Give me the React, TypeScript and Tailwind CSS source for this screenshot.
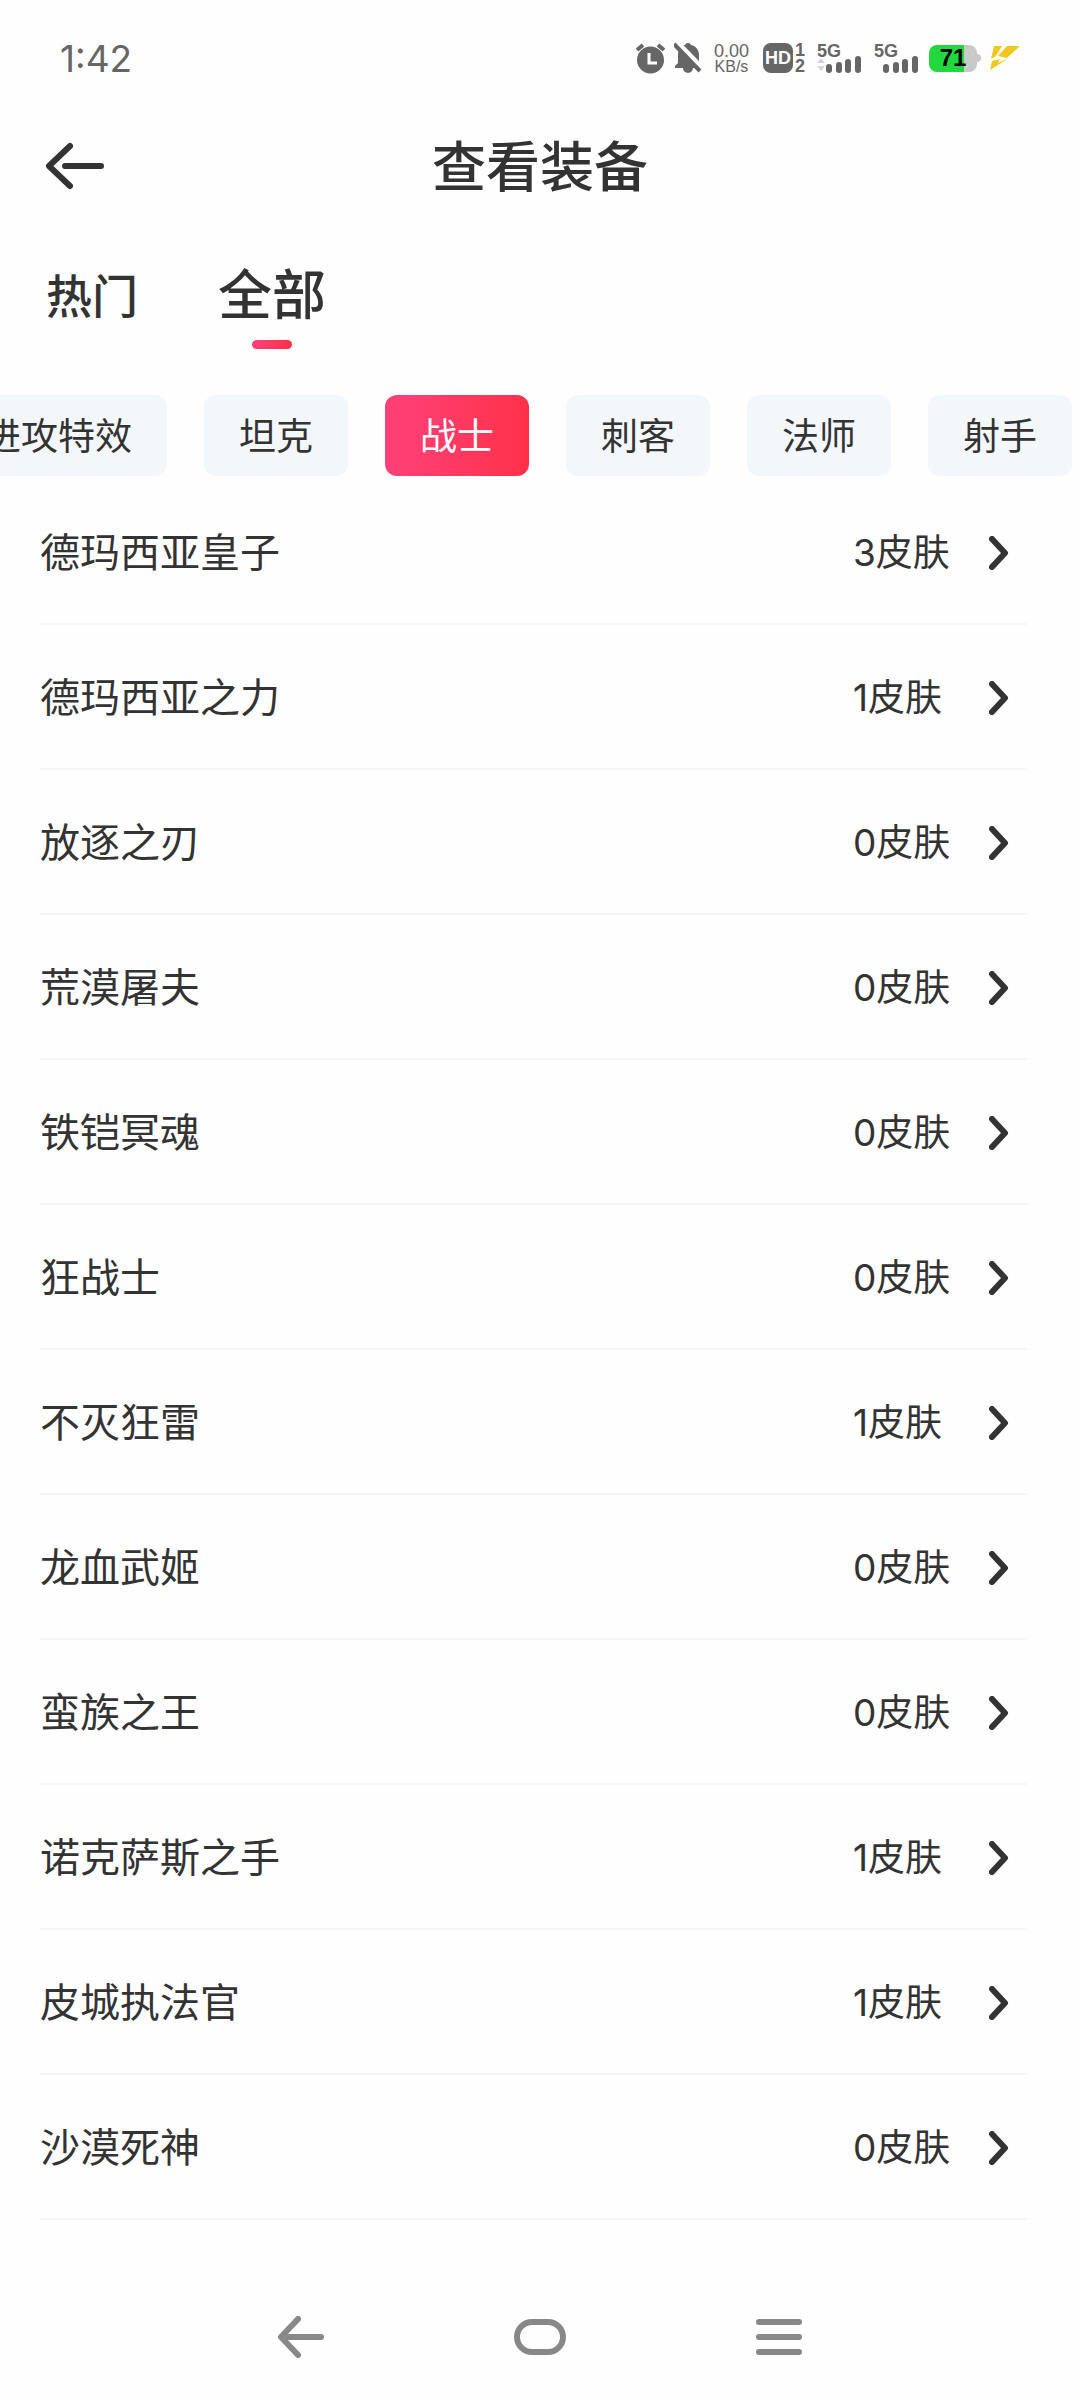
import React, { useState } from "react";

const CATEGORIES = ["进攻特效", "坦克", "战士", "刺客", "法师", "射手"];

const HEROES = [
  { name: "德玛西亚皇子", skins: 3 },
  { name: "德玛西亚之力", skins: 1 },
  { name: "放逐之刃", skins: 0 },
  { name: "荒漠屠夫", skins: 0 },
  { name: "铁铠冥魂", skins: 0 },
  { name: "狂战士", skins: 0 },
  { name: "不灭狂雷", skins: 1 },
  { name: "龙血武姬", skins: 0 },
  { name: "蛮族之王", skins: 0 },
  { name: "诺克萨斯之手", skins: 1 },
  { name: "皮城执法官", skins: 1 },
  { name: "沙漠死神", skins: 0 },
];

function Signal({ data = false }: { data?: boolean }) {
  return (
    <div className="relative h-8 w-[45px] font-['Liberation_Sans']">
      <span className="absolute top-0 left-0 text-[18px] leading-[18px] font-bold">5G</span>
      <svg className="absolute inset-0" width="45" height="32" viewBox="0 0 45 32" fill="currentColor" aria-hidden="true">
        {data && (
          <g fill="#d4d4d4">
            <path d="M0 21l4-5 4 5z" />
            <path d="M0 24h8l-4 5z" />
          </g>
        )}
        <rect x="9" y="22" width="6" height="9" rx="3" />
        <rect x="19" y="20" width="6" height="11" rx="3" />
        <rect x="28" y="17" width="6" height="14" rx="3" />
        <rect x="38" y="14" width="6" height="17" rx="3" />
      </svg>
    </div>
  );
}

function StatusBar() {
  return (
    <div className="flex h-[116px] items-center justify-between px-[60px] text-[#666666]">
      <time className="text-[37px] leading-none">1:42</time>
      <div className="flex items-center">
        <svg className="mr-2" width="31" height="32" viewBox="0 0 31 32" aria-hidden="true">
          <circle cx="15.500" cy="18" r="13.500" fill="currentColor" />
          <path d="M2 8l6-5M29 8l-6-5" stroke="currentColor" strokeWidth="4" />
          <path d="M14 11v10h8" fill="none" stroke="#fff" strokeWidth="3" />
        </svg>
        <svg className="mr-3" width="28" height="32" viewBox="0 0 28 32" aria-hidden="true">
          <path d="M14 1a3 3 0 0 1 3 2c5 1 8 5 8 10v9l3 3v1H19a5 5 0 0 1-10 0H1v-2l3-3v-8c0-5 2-9 7-10a3 3 0 0 1 3-2z" fill="currentColor" />
          <path d="M3 0l26 27" stroke="#fefefe" strokeWidth="5" />
          <path d="M0 2l26 27" stroke="currentColor" strokeWidth="4" />
        </svg>
        <div className="mr-3.5 flex flex-col items-center font-['Liberation_Sans'] text-[18px] leading-[18px]">
          <span>0.00</span>
          <span className="text-[16px] leading-[14px]">KB/s</span>
        </div>
        <div className="mr-3 flex items-center gap-0.5 font-['Liberation_Sans'] font-bold">
          <span className="flex h-[30px] w-[30px] items-center justify-center rounded-lg bg-[#666666] text-[18px] leading-none text-white">HD</span>
          <span className="flex flex-col items-center text-[18px] leading-4">
            <span>1</span>
            <span>2</span>
          </span>
        </div>
        <Signal data />
        <span className="w-3" />
        <Signal />
        <div className="ml-2.5 flex items-center">
          <span className="flex h-[27px] w-12 items-center justify-center rounded-lg bg-linear-to-r from-[#22d83e] from-72% to-[#c9c9c9] to-72% text-[24px] leading-none font-bold text-black font-['Liberation_Sans']">71</span>
          <span className="h-2 w-1 rounded-r bg-[#c9c9c9]" />
        </div>
        <svg className="ml-2" width="31" height="26" viewBox="0 0 31 26" fill="#efc91d" aria-hidden="true">
          <path d="M5 1h8L7 11l-5 3z" />
          <path d="M18 1h13L18 13l-9-2z" />
          <path d="M3 16l8-2-2 4 11-5L1 25z" />
        </svg>
      </div>
    </div>
  );
}

function BackIcon() {
  return (
    <svg width="60" height="50" viewBox="0 0 60 50" fill="none" stroke="currentColor" strokeWidth="6" strokeLinecap="round" strokeLinejoin="round" aria-hidden="true">
      <path d="M26 5L5 25l21 20M21 25h36" />
    </svg>
  );
}

function Chevron() {
  return (
    <svg width="20" height="34" viewBox="0 0 20 34" fill="none" stroke="currentColor" strokeWidth="6" strokeLinecap="round" strokeLinejoin="round" aria-hidden="true">
      <path d="M3 3l13 14L3 31" />
    </svg>
  );
}

export default function App() {
  const [tab, setTab] = useState("全部");
  const [category, setCategory] = useState("战士");

  return (
    <div className="flex min-h-screen flex-col overflow-x-hidden bg-[#fefefe] font-['Inter','Noto_Sans_CJK_SC',sans-serif] text-[#333333]">
      <StatusBar />

      <header className="grid h-[99px] grid-cols-[1fr_auto_1fr] items-center px-11">
        <button type="button" aria-label="返回" className="justify-self-start">
          <BackIcon />
        </button>
        <h1 className="pt-1 text-[54px] leading-none font-medium">查看装备</h1>
      </header>

      <nav className="flex h-[180px] gap-20 pt-[51px] pr-11 pl-[46px]">
        {["热门", "全部"].map((label) => (
          <button
            key={label}
            type="button"
            onClick={() => setTab(label)}
            className="flex h-[83px] flex-col items-center justify-between font-medium"
          >
            <span className={label === tab ? "text-[54px] leading-[60px]" : "text-[46px] leading-[60px]"}>{label}</span>
            {label === tab && <span className="h-[9px] w-10 rounded-full bg-linear-to-r from-[#ff4079] to-[#ff3048]" />}
          </button>
        ))}
      </nav>

      <div className="-ml-[51px] flex gap-[37px]">
        {CATEGORIES.map((label) => (
          <button
            key={label}
            type="button"
            onClick={() => setCategory(label)}
            className={
              label === category
                ? "h-[81px] shrink-0 rounded-xl bg-linear-to-r from-[#ff4079] to-[#ff3048] px-[35px] pt-0.5 text-[37px] leading-none text-white"
                : "h-[81px] shrink-0 rounded-xl bg-[#f4f7fa] px-[35px] pt-0.5 text-[37px] leading-none"
            }
          >
            {label}
          </button>
        ))}
      </div>

      <ul className="mt-1 mr-[53px] ml-10 flex-1">
        {HEROES.map((hero) => (
          <li key={hero.name} className="border-b-2 border-[#f6f6f6]">
            <button type="button" className="flex h-[143px] w-full items-center pt-0.5 pr-[18px] text-left">
              <span className="flex-1 text-[40px] leading-none">{hero.name}</span>
              <span className="w-[136px] text-[37px] leading-none">{hero.skins}皮肤</span>
              <Chevron />
            </button>
          </li>
        ))}
      </ul>

      <footer className="flex h-[126px] items-center justify-center gap-[189px] text-[#888888]">
        <button type="button" aria-label="后退">
          <svg width="48" height="42" viewBox="0 0 48 42" fill="none" stroke="currentColor" strokeWidth="6" strokeLinecap="round" strokeLinejoin="round" aria-hidden="true">
            <path d="M21 3L4 21l17 18M6 21h38" />
          </svg>
        </button>
        <button type="button" aria-label="主页" className="h-9 w-[52px] rounded-full border-[6px] border-current" />
        <button type="button" aria-label="最近任务">
          <svg width="48" height="42" viewBox="0 0 48 42" fill="none" stroke="currentColor" strokeWidth="6" strokeLinecap="round" aria-hidden="true">
            <path d="M4 6h40M4 21h40M4 36h40" />
          </svg>
        </button>
      </footer>
    </div>
  );
}
